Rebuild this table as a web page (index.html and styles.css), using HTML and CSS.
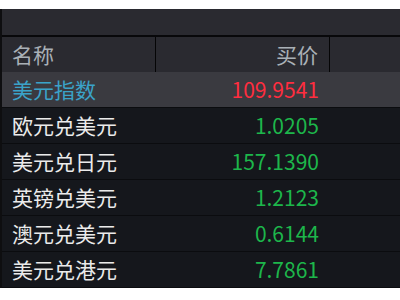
FILE: index.html
```html
<!DOCTYPE html>
<html lang="zh">
<head>
<meta charset="utf-8">
<link rel="stylesheet" href="styles.css">
</head>
<body>
<div class="panel">
  <div class="topbar"></div>
  <div class="row head">
    <div class="cell name">名称</div>
    <div class="cell price">买价</div>
    <div class="cell rest"></div>
  </div>
  <div class="row sel">
    <div class="cell name blue">美元指数</div>
    <div class="cell price red">109.9541</div>
    <div class="cell rest"></div>
  </div>
  <div class="row">
    <div class="cell name">欧元兑美元</div>
    <div class="cell price green">1.0205</div>
    <div class="cell rest"></div>
  </div>
  <div class="row">
    <div class="cell name">美元兑日元</div>
    <div class="cell price green">157.1390</div>
    <div class="cell rest"></div>
  </div>
  <div class="row">
    <div class="cell name">英镑兑美元</div>
    <div class="cell price green">1.2123</div>
    <div class="cell rest"></div>
  </div>
  <div class="row">
    <div class="cell name">澳元兑美元</div>
    <div class="cell price green">0.6144</div>
    <div class="cell rest"></div>
  </div>
  <div class="row">
    <div class="cell name">美元兑港元</div>
    <div class="cell price green">7.7861</div>
    <div class="cell rest"></div>
  </div>
</div>
</body>
</html>
```
FILE: styles.css
```css
html, body {
  margin: 0;
  padding: 0;
  background: #ffffff;
}
body {
  padding-top: 9px;
  font-family: "Noto Sans CJK SC", "Noto Sans", sans-serif;
  font-size: 21px;
}
.panel {
  width: 400px;
  border-left: 2px solid #0e0e10;
  box-sizing: border-box;
  background: #15171c;
}
.topbar {
  height: 26px;
  background: #2a2a30;
  border-bottom: 2px solid #08080a;
}
.row {
  display: grid;
  grid-template-columns: 154px 174px 1fr;
  height: 36px;
  border-bottom: 1px solid #0b0c0f;
  box-sizing: border-box;
  color: #ebebeb;
}
.row.head {
  height: 35px;
  border-bottom: none;
  background: #2a2a30;
  color: #a9b0b6;
}
.row.head .name,
.row.head .price {
  border-right: 1px solid #050506;
}
.row.sel {
  background: #3a3a40;
}
.cell {
  display: flex;
  align-items: center;
  line-height: 1;
  white-space: nowrap;
}
.name {
  padding-left: 10px;
}
.price {
  justify-content: flex-end;
  padding-right: 11px;
}
.blue { color: #3aa3c9; }
.red { color: #ff2d3f; }
.green { color: #1db64b; }
```
